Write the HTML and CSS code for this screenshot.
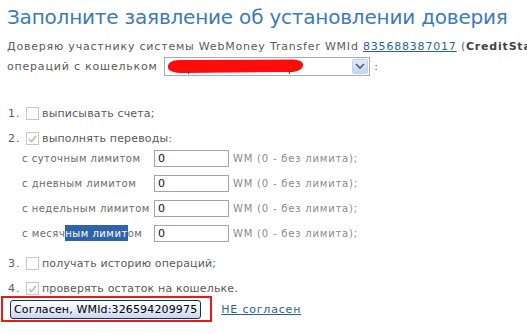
FILE: index.html
```html
<!DOCTYPE html>
<html lang="ru">
<head>
<meta charset="utf-8">
<link rel="stylesheet" href="styles.css">
</head>
<body>
<div class="page">
  <h1 class="title">Заполните заявление об установлении доверия</h1>
  <p class="trust">Доверяю участнику системы WebMoney Transfer WMId <a class="wmid" href="#">835688387017</a> (<b>CreditStar</b>)<br>
  операций с кошельком <span class="select"><span class="scribble"><svg width="138" height="15" viewBox="0 0 138 15"><path d="M2 7 C3 2 8 1 16 1 L126 0.5 C132 0.5 136 2 137 5 C137.5 9 134 12 127 13 L18 14 C7 14 1 12 2 7 Z" fill="#ff0d0d"/><path d="M124 12.5 l-1 2.5 M22 13.5 l1 1.5" stroke="#222" stroke-width="1"/></svg></span><span class="arrow"><svg width="10" height="7" viewBox="0 0 10 7"><path d="M1 1 L5 5 L9 1" fill="none" stroke="#4d6185" stroke-width="1.6"/></svg></span></span> :</p>

  <div class="perms">
    <div class="perm"><span class="num">1.</span><span class="cb"></span><span class="ptext">выписывать счета;</span></div>
    <div class="perm"><span class="num">2.</span><span class="cb checked"><svg width="9" height="8" viewBox="0 0 9 8"><path d="M1 4 L3.5 6.5 L8 1" fill="none" stroke="#a8c8a0" stroke-width="1.6"/></svg></span><span class="ptext">выполнять переводы:</span></div>
    <div class="limits">
      <div class="limit"><span class="llabel">с суточным лимитом</span><span class="inp">0</span><span class="lnote">WM (0 - без лимита);</span></div>
      <div class="limit"><span class="llabel">с дневным лимитом</span><span class="inp">0</span><span class="lnote">WM (0 - без лимита);</span></div>
      <div class="limit"><span class="llabel">с недельным лимитом</span><span class="inp">0</span><span class="lnote">WM (0 - без лимита);</span></div>
      <div class="limit"><span class="llabel">с месяч<span class="sel">ным лимит</span>ом</span><span class="inp">0</span><span class="lnote">WM (0 - без лимита);</span></div>
    </div>
    <div class="perm"><span class="num">3.</span><span class="cb"></span><span class="ptext">получать историю операций;</span></div>
    <div class="perm"><span class="num">4.</span><span class="cb checked"><svg width="9" height="8" viewBox="0 0 9 8"><path d="M1 4 L3.5 6.5 L8 1" fill="none" stroke="#a8c8a0" stroke-width="1.6"/></svg></span><span class="ptext">проверять остаток на кошельке.</span></div>
  </div>

  <div class="actions">
    <span class="hl"><span class="btn">Согласен, WMId:326594209975</span></span>
    <a class="no" href="#">НЕ согласен</a>
  </div>
</div>
</body>
</html>
```
FILE: styles.css
```css
html, body {
  margin: 0;
  padding: 0;
  background: #fff;
}
body {
  font-family: "DejaVu Sans", Verdana, sans-serif;
  color: #5a5a5a;
  overflow: hidden;
}
.page {
  padding: 3px 0 0 7px;
  width: 520px;
  overflow: hidden;
}
.title {
  margin: 0;
  font-size: 20px;
  line-height: 28px;
  font-weight: normal;
  color: #3b7abb;
  letter-spacing: -0.2px;
  white-space: nowrap;
}
.trust {
  margin: 6px 0 0 0;
  font-size: 11px;
  letter-spacing: 0.8px;
  line-height: 20px;
  white-space: nowrap;
  overflow: hidden;
}
.trust b {
  color: #444;
}
.wmid {
  color: #2d5f8f;
}
.select {
  display: inline-flex;
  vertical-align: middle;
  position: relative;
  top: -1px;
  width: 206px;
  height: 19px;
  border: 1px solid #a5acb5;
  box-sizing: border-box;
  margin-left: 2px;
  justify-content: space-between;
  align-items: center;
  padding: 1px;
}
.scribble {
  display: flex;
  margin-left: 0;
}
.arrow {
  width: 16px;
  height: 15px;
  box-sizing: border-box;
  background: linear-gradient(#e4ecf9, #c5d5f0);
  border: 1px solid #c3d3ee;
  border-radius: 2px;
  display: flex;
  align-items: center;
  justify-content: center;
}
.perms {
  margin-top: 24px;
}
.perm {
  display: flex;
  align-items: center;
  height: 25px;
  font-size: 11px;
  letter-spacing: 0.15px;
  white-space: nowrap;
}
.num {
  width: 18px;
  padding-left: 1px;
  letter-spacing: 1px;
}
.cb {
  width: 13px;
  height: 13px;
  box-sizing: border-box;
  border: 1px solid #c7c7c7;
  background: #fff;
  display: flex;
  align-items: center;
  justify-content: center;
  margin-right: 3px;
}
.limits {
  margin-top: -5px;
  padding: 0 0 5px 15px;
}
.limit {
  display: flex;
  align-items: center;
  height: 25px;
  font-size: 10px;
  letter-spacing: 0.5px;
  white-space: nowrap;
  color: #6a6a6a;
}
.llabel {
  width: 132px;
  flex: none;
}
.sel {
  background: #2f63a8;
  color: #fff;
  padding: 3px 0 2px;
}
.inp {
  width: 75px;
  height: 17px;
  flex: none;
  box-sizing: border-box;
  border: 1px solid #a5a5a5;
  font-size: 11px;
  line-height: 15px;
  padding-left: 3px;
  color: #111;
  letter-spacing: 0;
}
.lnote {
  margin-left: 4px;
  letter-spacing: 0.8px;
  color: #8a8a8a;
}
.actions {
  display: flex;
  align-items: center;
  margin-top: -5px;
  margin-left: -6px;
}
.hl {
  display: inline-flex;
  border: 2px solid #e31b1b;
  padding: 2px 9px 1px 7px;
}
.btn {
  display: inline-block;
  box-sizing: border-box;
  height: 19px;
  border: 1px solid #1c2e5a;
  border-radius: 3px;
  background: linear-gradient(#ffffff, #e8eef8 50%, #c9d6ec);
  font-size: 11px;
  letter-spacing: 0.15px;
  color: #000;
  padding: 0 3px;
  line-height: 17px;
  white-space: nowrap;
}
.no {
  margin-left: 9px;
  font-size: 11px;
  letter-spacing: 0.8px;
  color: #2d5f8f;
}
```
